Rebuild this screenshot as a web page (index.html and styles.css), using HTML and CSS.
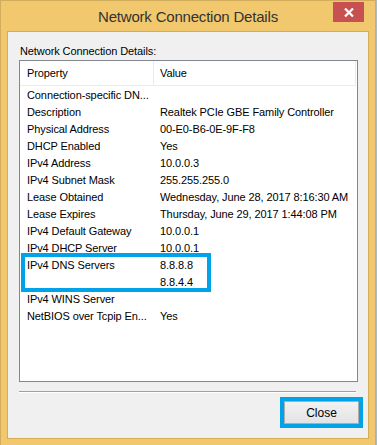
FILE: index.html
```html
<!DOCTYPE html>
<html>
<head>
  <title>Network Connection Details</title>
  <link rel="stylesheet" href="styles.css">
</head>
<body>
  <div class="window">
    <div class="titlebar">
      <span class="title">Network Connection Details</span>
      <button class="btn-close" aria-label="Close">
        <svg width="10" height="9" viewBox="0 0 10 9"><path d="M1 0.5 L9 8.5 M9 0.5 L1 8.5" stroke="#fff" stroke-width="2.2"/></svg>
      </button>
    </div>

    <div class="client">
      <div class="caption">Network Connection Details:</div>

      <div class="listbox">
        <div class="list-head">
          <div class="col-prop">Property</div>
          <div class="col-val">Value</div>
        </div>
        <div class="row"><div class="col-prop">Connection-specific DN...</div><div class="col-val"></div></div>
        <div class="row"><div class="col-prop">Description</div><div class="col-val">Realtek PCIe GBE Family Controller</div></div>
        <div class="row"><div class="col-prop">Physical Address</div><div class="col-val">00-E0-B6-0E-9F-F8</div></div>
        <div class="row"><div class="col-prop">DHCP Enabled</div><div class="col-val">Yes</div></div>
        <div class="row"><div class="col-prop">IPv4 Address</div><div class="col-val">10.0.0.3</div></div>
        <div class="row"><div class="col-prop">IPv4 Subnet Mask</div><div class="col-val">255.255.255.0</div></div>
        <div class="row"><div class="col-prop">Lease Obtained</div><div class="col-val">Wednesday, June 28, 2017 8:16:30 AM</div></div>
        <div class="row"><div class="col-prop">Lease Expires</div><div class="col-val">Thursday, June 29, 2017 1:44:08 PM</div></div>
        <div class="row"><div class="col-prop">IPv4 Default Gateway</div><div class="col-val">10.0.0.1</div></div>
        <div class="row"><div class="col-prop">IPv4 DHCP Server</div><div class="col-val">10.0.0.1</div></div>
        <div class="marked">
          <div class="row"><div class="col-prop">IPv4 DNS Servers</div><div class="col-val">8.8.8.8</div></div>
          <div class="row"><div class="col-prop"></div><div class="col-val">8.8.4.4</div></div>
        </div>
        <div class="row"><div class="col-prop">IPv4 WINS Server</div><div class="col-val"></div></div>
        <div class="row"><div class="col-prop">NetBIOS over Tcpip En...</div><div class="col-val">Yes</div></div>
      </div>

      <div class="separator"></div>

      <div class="footer">
        <button class="btn">Close</button>
      </div>
    </div>
  </div>
</body>
</html>
```

FILE: styles.css
```css
body {
  margin: 0;
  background: #a9bccb;
  font-family: "Liberation Sans", Arial, sans-serif;
  font-size: 11px;
  letter-spacing: -0.1px;
  color: #000;
}
.window {
  box-sizing: border-box;
  width: 376px;
  height: 445px;
  background: #f1c86d;
  border: 1px solid #d2ad5c;
  border-bottom: none;
  padding: 0 6px 6px 6px;
  display: flex;
  flex-direction: column;
}
.titlebar {
  position: relative;
  height: 30px;
  flex: none;
  display: flex;
  align-items: center;
  justify-content: center;
}
.title {
  font-size: 15px;
  letter-spacing: -0.2px;
  color: #333;
}
.btn-close {
  position: absolute;
  top: 1px;
  right: 5px;
  width: 31px;
  height: 20px;
  border: none;
  padding: 0;
  background: #c75050;
  display: flex;
  align-items: center;
  justify-content: center;
}
.client {
  flex: 1;
  background: #f0f0f0;
  border: 1px solid #d6ad55;
  display: flex;
  flex-direction: column;
}
.caption {
  padding: 11px 0 0 12px;
  height: 17px;
  line-height: 17px;
}
.listbox {
  margin: 0 10px 0 11px;
  height: 322px;
  box-sizing: border-box;
  background: #fff;
  border: 1px solid #828790;
}
.list-head {
  display: flex;
  height: 24px;
  line-height: 25px;
  border-bottom: 1px solid #e5ecf5;
  border-right: 1px solid #e5ecf5;
  margin-right: 1px;
}
.list-head .col-prop {
  border-right: 1px solid #e5ecf5;
}
.row {
  display: flex;
  height: 17px;
  line-height: 18px;
}
.col-prop {
  box-sizing: border-box;
  flex: none;
  width: 134px;
  padding-left: 7px;
  white-space: nowrap;
  overflow: hidden;
}
.col-val {
  padding-left: 6px;
  white-space: nowrap;
}
.marked {
  position: relative;
}
.marked::after {
  content: "";
  position: absolute;
  left: 1px;
  top: -3px;
  width: 182px;
  height: 31px;
  border: 4px solid #00a2e8;
}
.separator {
  margin: 9px 12px 0 11px;
  height: 1px;
  background: #a0a0a0;
  border-bottom: 1px solid #fff;
}
.footer {
  display: flex;
  justify-content: flex-end;
  padding: 8px 9px 0 0;
}
.btn {
  width: 75px;
  height: 23px;
  font: inherit;
  font-size: 12px;
  color: #000;
  background: linear-gradient(#f2f2f2, #e3e3e3);
  border: 1px solid #adadad;
  outline: 4px solid #00a2e8;
}
```
